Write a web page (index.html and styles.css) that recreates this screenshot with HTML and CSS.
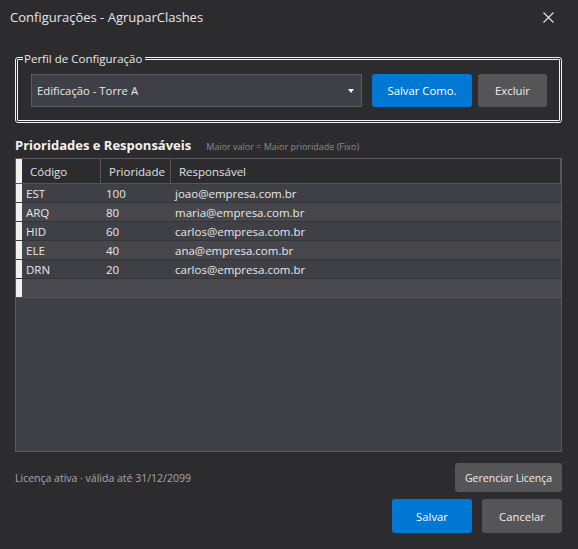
FILE: index.html
```html
<!DOCTYPE html>
<html lang="pt-BR">
  <head>
    <meta charset="UTF-8" />
    <meta name="viewport" content="width=device-width, initial-scale=1.0" />
    <title>Configurações - AgruparClashes</title>
    <link rel="stylesheet" href="styles.css">
  </head>
  <body>
    <div class="window">
      <!-- barra de título -->
      <div class="titlebar">
        <span class="title">Configurações - AgruparClashes</span>
        <svg class="close" width="11" height="11" viewBox="0 0 11 11">
          <path d="M0.5 0.5 L10.5 10.5 M10.5 0.5 L0.5 10.5" stroke="#e6e6e6" stroke-width="1.1" fill="none" />
        </svg>
      </div>

      <div class="content">
        <!-- perfil -->
        <fieldset class="profile">
          <legend>Perfil de Configuração</legend>
          <div class="profile-row">
            <div class="combo">
              <span>Edificação - Torre A</span>
              <span class="arrow"></span>
            </div>
            <button class="btn btn-primary btn-saveas">Salvar Como.</button>
            <button class="btn btn-secondary btn-delete">Excluir</button>
          </div>
        </fieldset>

        <!-- prioridades -->
        <div class="section-head">
          <h2>Prioridades e Responsáveis</h2>
          <span class="hint">Maior valor = Maior prioridade (Fixo)</span>
        </div>

        <div class="grid">
          <div class="grid-row grid-header">
            <div class="rowhead"></div>
            <div class="cell col-code">Código</div>
            <div class="cell col-prio">Prioridade</div>
            <div class="cell col-resp">Responsável</div>
          </div>
          <div class="grid-row">
            <div class="rowhead"></div>
            <div class="cell col-code">EST</div>
            <div class="cell col-prio">100</div>
            <div class="cell col-resp">joao@empresa.com.br</div>
          </div>
          <div class="grid-row alt">
            <div class="rowhead"></div>
            <div class="cell col-code">ARQ</div>
            <div class="cell col-prio">80</div>
            <div class="cell col-resp">maria@empresa.com.br</div>
          </div>
          <div class="grid-row">
            <div class="rowhead"></div>
            <div class="cell col-code">HID</div>
            <div class="cell col-prio">60</div>
            <div class="cell col-resp">carlos@empresa.com.br</div>
          </div>
          <div class="grid-row alt">
            <div class="rowhead"></div>
            <div class="cell col-code">ELE</div>
            <div class="cell col-prio">40</div>
            <div class="cell col-resp">ana@empresa.com.br</div>
          </div>
          <div class="grid-row">
            <div class="rowhead"></div>
            <div class="cell col-code">DRN</div>
            <div class="cell col-prio">20</div>
            <div class="cell col-resp">carlos@empresa.com.br</div>
          </div>
          <div class="grid-row new-row">
            <div class="rowhead"></div>
            <div class="cell col-code"></div>
            <div class="cell col-prio"></div>
            <div class="cell col-resp"></div>
          </div>
        </div>

        <!-- rodapé -->
        <div class="license-row">
          <span class="license">Licença ativa · válida até 31/12/2099</span>
          <button class="btn btn-secondary btn-license">Gerenciar Licença</button>
        </div>
        <div class="actions">
          <button class="btn btn-primary btn-action">Salvar</button>
          <button class="btn btn-secondary btn-action">Cancelar</button>
        </div>
      </div>
    </div>
  </body>
</html>
```

FILE: styles.css
```css
body {
  margin: 0;
  background-color: #2c2c2f;
  font-family: "Segoe UI", "Open Sans", "Noto Sans", sans-serif;
  color: #e8e8e8;
}
.window {
  width: 578px;
  height: 549px;
}
.titlebar {
  height: 34px;
  display: flex;
  align-items: center;
  justify-content: space-between;
  padding: 0 24px 0 10px;
}
.title {
  font-size: 13px;
  color: #e6e6e6;
}
.content {
  padding: 0 16px 0 15px;
}
.profile {
  margin: 17px 0 0 0;
  padding: 8px 12px 13px 13px;
  border: 3px double #f2f2f2;
  border-radius: 3px;
}
.profile legend {
  font-size: 11.5px;
  padding: 0 3px 0 1px;
  margin-left: -8px;
  color: #e8e8e8;
}
.profile-row {
  display: flex;
  align-items: center;
}
.combo {
  width: 331px;
  height: 33px;
  box-sizing: border-box;
  background: #3f4047;
  border: 1px solid #5a5b60;
  display: flex;
  align-items: center;
  justify-content: space-between;
  padding: 0 7px 0 5px;
  font-size: 11.3px;
}
.arrow {
  width: 0;
  height: 0;
  border-left: 3.5px solid transparent;
  border-right: 3.5px solid transparent;
  border-top: 4px solid #f4f4f4;
}
.btn {
  font-family: inherit;
  font-size: 11.3px;
  color: #eeeeee;
  border: none;
  border-radius: 3px;
  cursor: pointer;
  padding: 0;
}
.btn-primary {
  background-color: #0078d4;
  color: #ffffff;
}
.btn-secondary {
  background-color: #555557;
}
.btn-saveas {
  width: 100px;
  height: 33px;
  margin-left: 10px;
}
.btn-delete {
  width: 69px;
  height: 33px;
  margin-left: 6px;
}
.section-head {
  display: flex;
  align-items: baseline;
  margin-top: 13px;
  height: 22px;
}
.section-head h2 {
  margin: 0;
  font-size: 13px;
  font-weight: bold;
  color: #f2f2f2;
}
.hint {
  font-size: 9px;
  color: #8a8a8c;
  margin-left: 15px;
}
.grid {
  height: 294px;
  box-sizing: border-box;
  border: 1px solid #5a5a5e;
  background: #3f4046;
}
.grid-row {
  display: flex;
  height: 19px;
  font-size: 11.5px;
  background: #3f4046;
  border-bottom: 1px solid #35363a;
  box-sizing: border-box;
}
.grid-row.alt {
  background: #46464b;
}
.grid-row.new-row {
  background: #4a494e;
  border-bottom: 1px solid #55555a;
}
.grid-header {
  height: 25px;
  background: #2c2c2f;
  border-bottom: 1px solid #55555a;
}
.rowhead {
  width: 6px;
  background: #f0f0f0;
  flex: none;
}
.cell {
  display: flex;
  align-items: center;
  padding-left: 4px;
  box-sizing: border-box;
  white-space: nowrap;
  overflow: hidden;
}
.col-code {
  width: 79px;
}
.col-prio {
  width: 70px;
  padding-left: 5px;
}
.col-resp {
  flex: 1;
}
.grid-header .cell {
  padding-left: 8px;
  border-right: 1px solid #55555a;
  color: #e0e0e0;
}
.license-row {
  display: flex;
  align-items: center;
  justify-content: space-between;
  margin-top: 11px;
}
.license {
  font-size: 10.5px;
  color: #a8a8aa;
}
.btn-license {
  width: 107px;
  height: 29px;
  font-size: 10.5px;
}
.actions {
  display: flex;
  justify-content: flex-end;
  gap: 10px;
  margin-top: 7px;
}
.btn-action {
  width: 80px;
  height: 34px;
}
```
